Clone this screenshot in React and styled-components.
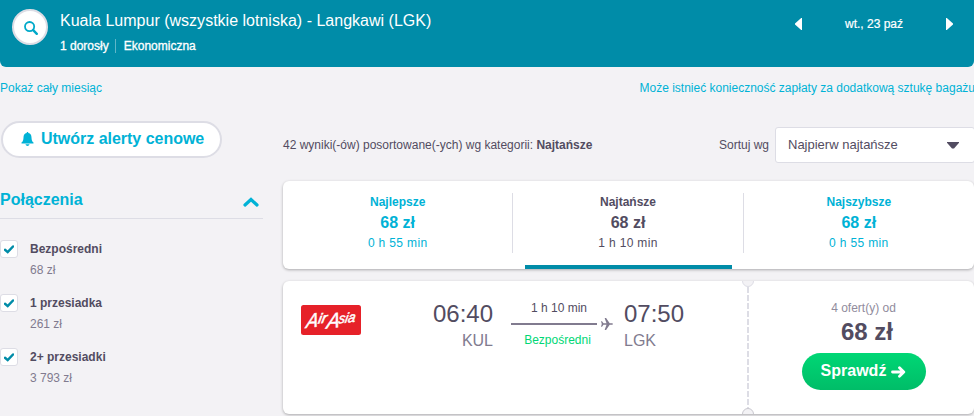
import React from "react";
import styled, { createGlobalStyle, css } from "styled-components";

const GlobalStyle = createGlobalStyle`
  * {
    box-sizing: border-box;
  }
  body {
    margin: 0;
    background: #f3f2f5;
    color: #524c61;
    font-family: "Liberation Sans", Arial, sans-serif;
    font-size: 12px;
    line-height: 16px;
    overflow: hidden;
  }
  button {
    font-family: inherit;
    cursor: pointer;
  }
`;

const Page = styled.div`
  width: 974px;
  height: 416px;
  overflow: hidden;
`;

const Header = styled.header`
  display: flex;
  align-items: flex-start;
  height: 67px;
  padding: 9px 21px 0 12px;
  background: #008ca8;
  border-radius: 0 0 6px 6px;
  color: #fff;
`;

const SearchButton = styled.button`
  display: flex;
  align-items: center;
  justify-content: center;
  width: 36px;
  height: 36px;
  padding: 2px 0 0 2px;
  border: 2px solid #dddde5;
  border-radius: 50%;
  background: #fff;
`;

const Trip = styled.div`
  flex: 1;
  padding: 2px 0 0 12px;
`;

const Route = styled.div`
  font-size: 16px;
  line-height: 20px;
  letter-spacing: 0.01px;
  white-space: nowrap;
`;

const Details = styled.div`
  display: flex;
  margin-top: 8px;
  line-height: 14px;
  -webkit-text-stroke: 0.3px #fff;

  span + span {
    margin-left: 6px;
    padding-left: 8px;
    border-left: 1px solid #5fb6c8;
  }
`;

const DatePicker = styled.div`
  display: flex;
  align-items: center;
  justify-content: space-between;
  width: 158px;
  height: 30px;
  -webkit-text-stroke: 0.2px #fff;
`;

const Links = styled.div`
  display: flex;
  justify-content: space-between;
  height: 54px;
  padding-top: 13px;
  color: #00b2d6;
  white-space: nowrap;

  span:last-child {
    margin-right: -1px;
  }
`;

const Columns = styled.div`
  display: flex;
  gap: 20px;
`;

const Sidebar = styled.aside`
  width: 263px;
`;

const AlertButton = styled.button`
  display: flex;
  align-items: center;
  gap: 7px;
  width: 221px;
  height: 37px;
  margin-left: 1px;
  padding: 0 0 2px 18px;
  border: 2px solid #dddde5;
  border-radius: 19px;
  background: #fff;
  color: #00b2d6;
  font-size: 16px;
  font-weight: bold;
  letter-spacing: -0.02px;
  white-space: nowrap;
`;

const FilterTitle = styled.div`
  display: flex;
  align-items: center;
  justify-content: space-between;
  height: 38px;
  margin-top: 23px;
  padding-right: 4px;
  border-bottom: 1px solid #dddde5;
  color: #00b2d6;
  font-size: 16px;
  font-weight: bold;

  svg {
    margin-top: 4px;
  }
`;

const FilterRow = styled.label`
  display: flex;
  gap: 12px;
  height: 54px;
`;

const FilterList = styled.div`
  padding-top: 21px;
`;

const Checkbox = styled.span`
  display: flex;
  align-items: center;
  justify-content: center;
  width: 18px;
  height: 18px;
  border: 1px solid #dddde5;
  border-radius: 3px;
  background: #fff;
`;

const FilterText = styled.div`
  padding-top: 1px;
  color: #817b8f;
  line-height: 21px;

  strong {
    display: block;
    color: #524c61;
    line-height: 17px;
    margin-bottom: 2px;
  }
`;

const Main = styled.main`
  width: 691px;
`;

const Toolbar = styled.div`
  display: flex;
  align-items: center;
  justify-content: space-between;
  height: 48px;
  margin-bottom: 12px;
`;

const Sort = styled.div`
  display: flex;
  align-items: center;
  gap: 6px;
`;

const Select = styled.div`
  display: flex;
  align-items: center;
  justify-content: space-between;
  width: 200px;
  height: 36px;
  margin-right: -1px;
  padding: 0 15px 0 12px;
  border: 1px solid #dddde5;
  border-radius: 3px;
  background: #fff;
  font-size: 13px;
`;

const card = css`
  background: #fff;
  border-radius: 6px;
  box-shadow: 0 1px 3px rgba(0, 0, 0, 0.3);
`;

const Tabs = styled.div`
  ${card}
  display: flex;
  height: 88px;
  padding-top: 12px;
`;

const Tab = styled.div`
  display: flex;
  flex-direction: column;
  align-items: center;
  flex: 1;
  color: ${(p) => (p.$active ? "#524c61" : "#00b2d6")};
  text-align: center;
`;

const TabBody = styled.div`
  width: 100%;
  height: 60px;
  border-right: ${(p) => (p.$last ? "0" : "1px solid #dddde5")};
`;

const TabName = styled.div`
  font-weight: bold;
  line-height: 18px;
`;

const TabPrice = styled.div`
  font-size: 16px;
  font-weight: bold;
  line-height: 24px;
`;

const TabTime = styled.div`
  line-height: 16px;
  letter-spacing: 0.35px;
`;

const TabLine = styled.div`
  width: 207px;
  height: 4px;
  margin-top: 12px;
  background: #008ca8;
`;

const Ticket = styled.div`
  ${card}
  display: flex;
  height: 133px;
  margin-top: 12px;
`;

const Leg = styled.div`
  display: flex;
  width: 465px;
  padding: 18px 0 0 18px;
`;

const Logo = styled.svg`
  margin-top: 6px;
`;

const Stop = styled.div`
  width: ${(p) => (p.$right ? "132px" : "62px")};
  color: #817b8f;
  font-size: 16px;
  line-height: 24px;
  text-align: ${(p) => (p.$right ? "right" : "left")};

  div {
    color: #524c61;
    font-size: 24px;
    line-height: 30px;
  }
`;

const Flight = styled.div`
  width: 102px;
  margin: 0 11px 0 18px;
`;

const FlightText = styled.div`
  width: ${(p) => (p.$direct ? "93px" : "96px")};
  line-height: 18px;
  color: ${(p) => (p.$direct ? "#00d775" : "#524c61")};
  text-align: center;
`;

const FlightLine = styled.div`
  display: flex;
  align-items: center;
  gap: 4px;
  height: 14px;

  &::before {
    content: "";
    width: 86px;
    height: 2px;
    background: #817b8f;
  }
`;

const Perforation = styled.svg`
  display: block;
  flex: none;
  margin-left: -7px;
`;

const Offer = styled.div`
  display: flex;
  flex-direction: column;
  align-items: center;
  width: 217px;
  padding: 19px 0 0 0;
  color: #918c9d;
`;

const Price = styled.div`
  margin: 2px 0 7px 7px;
  color: #524c61;
  font-size: 24px;
  font-weight: bold;
  line-height: 28px;
`;

const CheckButton = styled.button`
  display: flex;
  align-items: center;
  justify-content: center;
  gap: 5px;
  width: 124px;
  height: 37px;
  padding: 0 0 2px;
  border: 0;
  border-radius: 19px;
  background: linear-gradient(#00d775, #00bd68);
  color: #fff;
  font-size: 16px;
  font-weight: bold;

  svg {
    margin-top: 2px;
  }
`;

const filters = [
  { name: "Bezpośredni", price: "68 zł" },
  { name: "1 przesiadka", price: "261 zł" },
  { name: "2+ przesiadki", price: "3 793 zł" },
];

const tabs = [
  { name: "Najlepsze", price: "68 zł", time: "0 h 55 min" },
  { name: "Najtańsze", price: "68 zł", time: "1 h 10 min", active: true },
  { name: "Najszybsze", price: "68 zł", time: "0 h 55 min" },
];

function SearchIcon() {
  return (
    <svg width="16" height="16" viewBox="0 0 16 16" fill="none" stroke="#00a9c9">
      <circle cx="6.6" cy="6.6" r="4.6" strokeWidth="1.8" />
      <path d="M10.2 10.2l3.6 3.6" strokeWidth="2.4" strokeLinecap="round" />
    </svg>
  );
}

function Triangle({ right }) {
  return (
    <svg width="7" height="12" viewBox="0 0 7 12" fill="#fff">
      <path d={right ? "M0 0h.8L7 5.5v1L.8 12H0z" : "M7 0h-.8L0 5.5v1L6.2 12H7z"} />
    </svg>
  );
}

function BellIcon() {
  return (
    <svg width="13" height="14" viewBox="0 0 13 14" fill="#00b2d6">
      <path d="M6 0h1l.4 1.1C9.6 1.6 10.4 3.2 10.5 5.4c.1 2.6.5 4 2 5.1v1H.5v-1c1.5-1.1 1.9-2.5 2-5.1C2.6 3.2 3.4 1.6 5.6 1.1z" />
      <path d="M4.500 12.200h4c-.5 2.300-3.500 2.300-4 0z" />
    </svg>
  );
}

function CheckIcon() {
  return (
    <svg width="10" height="9" viewBox="0 0 10 9" fill="none">
      <path d="M1 4.800l2.700 2.300L9 1.500" stroke="#008ca8" strokeWidth="2.500" strokeLinecap="round" />
    </svg>
  );
}

function PlaneIcon() {
  return (
    <svg width="12" height="12" viewBox="0 0 12 12" fill="#817b8f">
      <path d="M0 3.200h1l1.500 2h3L3.800.4V0h1.300l3.600 5.200h2.200q1.100.2 1.100.8t-1.100.8H8.700L5.100 12H3.800v-.4L5.500 6.800h-3l-1.500 2H0L.8 6z" />
    </svg>
  );
}

function AirAsia() {
  return (
    <Logo width="60" height="30" viewBox="0 0 60 30">
      <rect width="60" height="30" rx="2.500" fill="#e62129" />
      <g
        transform="translate(4.500 23) rotate(-6) skewX(-16)"
        fill="#fff"
        stroke="#fff"
        strokeWidth=".5"
        fontFamily="Liberation Sans, sans-serif"
        fontStyle="italic"
      >
        <text fontSize="20" textLength="12" lengthAdjust="spacingAndGlyphs">A</text>
        <text x="11.500" y="-3" fontSize="14" textLength="9" lengthAdjust="spacingAndGlyphs">ir</text>
        <text x="21" y="2.500" fontSize="21" textLength="13" lengthAdjust="spacingAndGlyphs">A</text>
        <text x="32.500" y="-1" fontSize="14" textLength="17" lengthAdjust="spacingAndGlyphs">sia</text>
      </g>
    </Logo>
  );
}

export default function App() {
  return (
    <Page>
      <GlobalStyle />
      <Header>
        <SearchButton>
          <SearchIcon />
        </SearchButton>
        <Trip>
          <Route>Kuala Lumpur (wszystkie lotniska) - Langkawi (LGK)</Route>
          <Details>
            <span>1 dorosły</span>
            <span>Ekonomiczna</span>
          </Details>
        </Trip>
        <DatePicker>
          <Triangle />
          <span>wt., 23 paź</span>
          <Triangle right />
        </DatePicker>
      </Header>

      <Links>
        <span>Pokaż cały miesiąc</span>
        <span>Może istnieć konieczność zapłaty za dodatkową sztukę bagażu</span>
      </Links>

      <Columns>
        <Sidebar>
          <AlertButton>
            <BellIcon />
            Utwórz alerty cenowe
          </AlertButton>
          <FilterTitle>
            Połączenia
            <svg width="16" height="10" viewBox="0 0 16 10" fill="none">
              <path d="M2 8l6-5.500L14 8" stroke="#00b2d6" strokeWidth="3.200" strokeLinecap="round" />
            </svg>
          </FilterTitle>
          <FilterList>
            {filters.map((f) => (
              <FilterRow key={f.name}>
                <Checkbox>
                  <CheckIcon />
                </Checkbox>
                <FilterText>
                  <strong>{f.name}</strong>
                  {f.price}
                </FilterText>
              </FilterRow>
            ))}
          </FilterList>
        </Sidebar>

        <Main>
          <Toolbar>
            <span>
              42 wyniki(-ów) posortowane(-ych) wg kategorii: <b>Najtańsze</b>
            </span>
            <Sort>
              Sortuj wg
              <Select>
                Najpierw najtańsze
                <svg width="12" height="7" viewBox="0 0 12 7" fill="#524c61">
                  <path d="M0 0h12v.8L7 6.500H5L0 .8z" />
                </svg>
              </Select>
            </Sort>
          </Toolbar>

          <Tabs>
            {tabs.map((t, i) => (
              <Tab key={t.name} $active={t.active}>
                <TabBody $last={i === tabs.length - 1}>
                  <TabName>{t.name}</TabName>
                  <TabPrice>{t.price}</TabPrice>
                  <TabTime>{t.time}</TabTime>
                </TabBody>
                {t.active && <TabLine />}
              </Tab>
            ))}
          </Tabs>

          <Ticket>
            <Leg>
              <AirAsia />
              <Stop $right>
                <div>06:40</div>
                KUL
              </Stop>
              <Flight>
                <FlightText>1 h 10 min</FlightText>
                <FlightLine>
                  <PlaneIcon />
                </FlightLine>
                <FlightText $direct>Bezpośredni</FlightText>
              </Flight>
              <Stop>
                <div>07:50</div>
                LGK
              </Stop>
            </Leg>
            <Perforation width="14" height="133" viewBox="0 0 14 133">
              <path d="M7 6v121" stroke="#dddde5" strokeWidth="2" strokeDasharray="6 2" />
              <circle cx="7" cy="0" r="5.500" fill="#f3f2f5" stroke="#dddde5" />
              <circle cx="7" cy="133" r="5.500" fill="#f3f2f5" stroke="#c8c7ce" />
            </Perforation>
            <Offer>
              <span>4 ofert(y) od</span>
              <Price>68 zł</Price>
              <CheckButton>
                Sprawdź
                <svg width="15" height="12" viewBox="0 0 15 12" fill="none" stroke="#fff" strokeWidth="2.800" strokeLinecap="round" strokeLinejoin="round">
                  <path d="M1.500 6h11M8.500 1.800L12.800 6l-4.300 4.200" />
                </svg>
              </CheckButton>
            </Offer>
          </Ticket>
        </Main>
      </Columns>
    </Page>
  );
}
